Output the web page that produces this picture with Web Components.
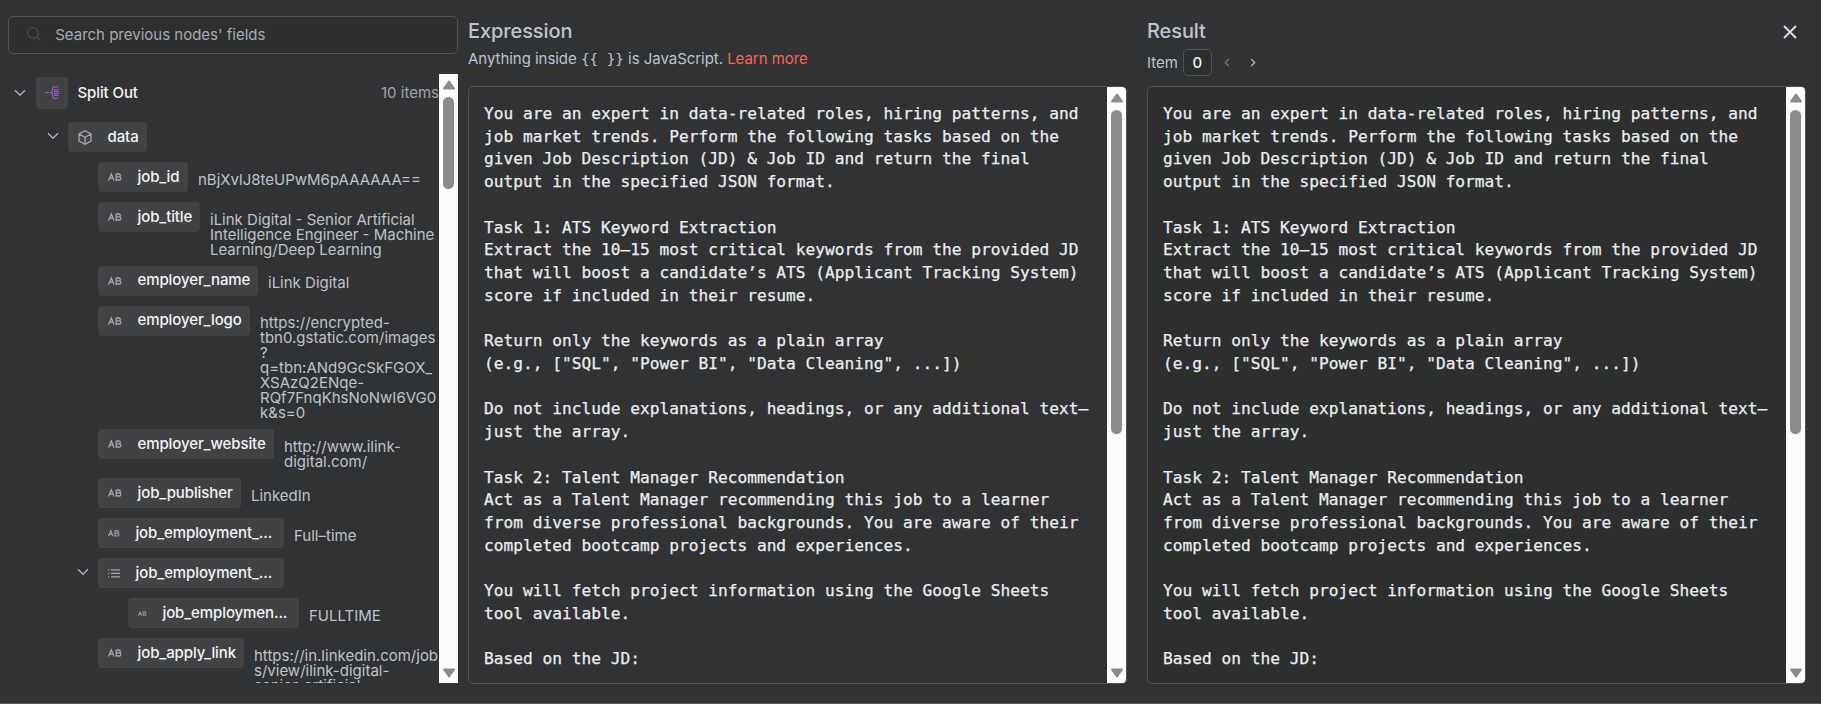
<!DOCTYPE html>
<html lang="en">
<head>
<meta charset="utf-8">
<title>Edit Expression</title>
<style>
html,body{margin:0;height:100%;background:#313234;overflow:hidden}
body{font-family:Inter,"Liberation Sans",sans-serif;color:#bec4cd}
</style>
</head>
<body>
<expression-modal></expression-modal>
<script>
function define(name, html, setup) {
  const t = document.createElement('template');
  t.innerHTML = html;
  customElements.define(name, class extends HTMLElement {
    connectedCallback() {
      if (this.shadowRoot) return;
      this.attachShadow({ mode: 'open' }).append(t.content.cloneNode(true));
      if (setup) setup(this, this.shadowRoot);
    }
  });
}

const icons = {
  search: [14, 14, '<circle cx="6" cy="6" r="5.3"/><path d="M10 10l3.5 3.5"/>'],
  down: [12, 8, '<path d="M1 1.3l5 5 5-5"/>'],
  left: [6, 9, '<path d="M4.8 1L1.3 4.5l3.5 3.5"/>'],
  right: [6, 9, '<path d="M1.2 1l3.5 3.5L1.2 8"/>'],
  close: [14, 14, '<path d="M1 1l12 12M13 1L1 13" stroke-width="1.8"/>'],
  cube: [14, 15, '<path d="M7 .8l6 3.2v7L7 14.2 1 11V4zM1 4l6 3.3L13 4M7 7.3v6.9"/>'],
  list: [12, 9, '<path d="M3 .9h9M3 4.4h9M3 7.9h9M0 .9h1.2M0 4.4h1.2M0 7.9h1.2"/>'],
  ab: [14, 8, '<path d="M.6 7.4L3.3 .9 6 7.4M1.6 5.2h3.4M8.2 1v6h3q1.7 0 1.7-1.6T11.2 3.8h-3M8.2 1h2.7q1.4 0 1.4 1.4t-1.4 1.4"/>'],
  split: [15, 14, '<path d="M0 7h4M13.500 1H10q-2 0-2 2v1.800Q8 7 5.600 7 8 7 8 9.200V11q0 2 2 2h3.500M9.500 4h5M9.500 6h5M9.500 8h5M9.500 10h5" stroke-width="1.300"/>']
};
define('ui-icon', '<style>:host{display:inline-flex;flex:none}svg{display:block;fill:none;stroke:currentColor;stroke-width:1.3;overflow:visible}</style>', (el, root) => {
  const [w, h, p] = icons[el.getAttribute('name')];
  const k = +(el.getAttribute('scale') || 1);
  root.innerHTML += `<svg width="${w * k}" height="${h * k}" viewBox="0 0 ${w} ${h}">${p}</svg>`;
});

define('scroll-bar', `<style>
:host{display:flex;flex-direction:column;align-items:center;box-sizing:border-box;width:19px;flex:none;background:#fcfcfc;padding:6px 0 5px}
svg{display:block;fill:#8b8b8b;stroke:#8b8b8b;stroke-width:2;stroke-linejoin:round;flex:none}
i{width:11px;border-radius:6px;background:#8b8b8b;margin-top:7px;height:var(--thumb)}
span{flex:1}
</style><svg width="12" height="10"><path d="M6 1.500L11 8.500H1z"/></svg><i></i><span></span><svg width="12" height="10"><path d="M6 8.500L11 1.500H1z"/></svg>`);

define('search-field', `<style>
:host{display:flex;align-items:center;box-sizing:border-box;height:38px;border:1px solid #525356;border-radius:5px;background:#2d2e2e;padding:0 18px 1px;font-size:15px;color:#a6abb3}
ui-icon{color:#47494b;margin-right:14.2px;margin-top:-2px}
</style><ui-icon name="search"></ui-icon><slot></slot>`);

define('field-row', `<style>
:host{display:flex;align-items:flex-start;margin-bottom:10px;line-height:15px;font-size:15px}
.caret{display:flex;box-sizing:border-box;width:30px;height:30px;padding:9.5px 0 0 9px;color:#b0b5bd;flex:none}
.chip{display:flex;align-items:center;box-sizing:border-box;height:30px;border-radius:4px;background:#414244;padding-left:10px;flex:none;color:#f3f4f6;font-weight:500}
.chip ui-icon{color:#a3a7ad}
.chip b{font-weight:inherit;white-space:nowrap;line-height:20px;margin-top:-1px}
.val{white-space:pre;padding:9.5px 0 0 10px;margin-bottom:-.8px;color:#bec4cd}
</style><span class="caret"></span><span class="chip"></span><span class="val"><slot></slot></span>`, (el, root) => {
  const a = n => el.getAttribute(n);
  if (a('open') !== null) root.querySelector('.caret').innerHTML = '<ui-icon name="down"></ui-icon>';
  const chip = root.querySelector('.chip');
  chip.style.width = a('w') + 'px';
  const b = document.createElement('b');
  b.textContent = a('label');
  b.style.marginLeft = (a('gap') || 15.5) + 'px';
  b.style.letterSpacing = (a('ls') || -0.1) + 'px';
  chip.innerHTML = `<ui-icon name="${a('icon') || 'ab'}" scale="${a('scale') || 1}"></ui-icon>`;
  chip.append(b);
  el.style.marginLeft = (a('indent') || 68) + 'px';
});

define('node-header', `<style>
:host{display:flex;align-items:center;height:32px;margin:3px 0 13px;padding-left:6px;font-size:15px}
ui-icon{color:#b0b5bd}
.box{display:flex;align-items:center;justify-content:center;width:32px;height:32px;border-radius:4px;background:#414244;margin:0 9.5px 0 10px}
.box ui-icon{color:#8b62c4;margin-top:-1px}
.name{flex:1;color:#f3f4f6;font-weight:500;letter-spacing:-.1px;margin-top:-2px}
.count{color:#a0a5ad;margin-top:-2px}
</style><ui-icon name="down"></ui-icon><span class="box"><ui-icon name="split" scale=".95"></ui-icon></span><span class="name"><slot></slot></span><span class="count">10 items</span>`);

define('schema-panel', `<style>
:host{display:flex;flex-direction:column;width:450px;padding:16px 10px 0 8px;flex:none}
.body{display:flex;height:609px;margin-top:20px;overflow:hidden}
.list{flex:1;min-width:0;overflow:hidden}
scroll-bar{--thumb:92px}
</style>
<search-field>Search previous nodes' fields</search-field>
<div class="body"><div class="list">
<node-header>Split Out</node-header>
<field-row indent="30" open icon="cube" w="79" label="data"></field-row>
<field-row indent="60" w="90" label="job_id">nBjXvlJ8teUPwM6pAAAAAA==</field-row>
<field-row indent="60" w="102" label="job_title">iLink Digital - Senior Artificial
Intelligence Engineer - Machine
Learning/Deep Learning</field-row>
<field-row indent="60" w="160" label="employer_name">iLink Digital</field-row>
<field-row indent="60" w="152" label="employer_logo">https://encrypted-
tbn0.gstatic.com/images
?
q=tbn:ANd9GcSkFGOX_
XSAzQ2ENqe-
RQf7FnqKhsNoNwI6VG0
k&amp;s=0</field-row>
<field-row indent="60" w="176" label="employer_website">http://www.ilink-
digital.com/</field-row>
<field-row indent="60" w="143" label="job_publisher">LinkedIn</field-row>
<field-row indent="60" w="186" scale=".85" label="job_employment_...">Full–time</field-row>
<field-row indent="60" w="186" open icon="list" label="job_employment_..."></field-row>
<field-row indent="90" w="171" scale=".64" label="job_employmen...">FULLTIME</field-row>
<field-row indent="60" w="146" label="job_apply_link">https://in.linkedin.com/job
s/view/ilink-digital-
senior-artificial</field-row>
</div><scroll-bar></scroll-bar></div>`);

define('code-box', `<style>
:host{display:flex;box-sizing:border-box;height:598px;border:1px solid #525356;border-radius:5px;overflow:hidden;background:var(--box-bg,#313234)}
pre{flex:1;min-width:0;margin:0;padding:16px 0 0 15px;font:16.2px/22.72px "DejaVu Sans Mono",monospace;color:#eceef0;-webkit-text-stroke:.25px #eceef0;overflow:hidden}
scroll-bar{--thumb:324px}
</style><pre></pre><scroll-bar></scroll-bar>`, (el, root) => {
  root.querySelector('pre').textContent = `You are an expert in data-related roles, hiring patterns, and
job market trends. Perform the following tasks based on the
given Job Description (JD) & Job ID and return the final
output in the specified JSON format.

Task 1: ATS Keyword Extraction
Extract the 10–15 most critical keywords from the provided JD
that will boost a candidate’s ATS (Applicant Tracking System)
score if included in their resume.

Return only the keywords as a plain array
(e.g., ["SQL", "Power BI", "Data Cleaning", ...])

Do not include explanations, headings, or any additional text—
just the array.

Task 2: Talent Manager Recommendation
Act as a Talent Manager recommending this job to a learner
from diverse professional backgrounds. You are aware of their
completed bootcamp projects and experiences.

You will fetch project information using the Google Sheets
tool available.

Based on the JD:`;
});

define('editor-pane', `<style>
:host{display:block;width:659px;flex:none}
.head{box-sizing:border-box;height:86px;padding-top:19px}
.title{display:flex;justify-content:space-between;align-items:flex-start;font-size:20px;line-height:24px;font-weight:500;height:24px;letter-spacing:-.1px}
</style><div class="head"><div class="title"><slot name="title"></slot><slot name="action"></slot></div><slot></slot></div><code-box></code-box>`);

define('expression-hint', `<style>
:host{display:block;font-size:15px;line-height:20px;padding-top:6px;white-space:pre;letter-spacing:-.04px}
code{font:14.3px "DejaVu Sans Mono",monospace;letter-spacing:0}
a{color:#f2695a}
</style>Anything inside <code>{{ }}</code> is JavaScript. <a>Learn more</a>`);

define('item-picker', `<style>
:host{display:flex;align-items:center;height:27px;padding-top:6px;font-size:15px}
.num{display:flex;align-items:center;justify-content:center;box-sizing:border-box;width:29px;height:27px;border:1px solid #525356;border-radius:5px;background:#2d2e2e;color:#f3f4f6;margin:0 12px 0 5px;font-weight:500}
ui-icon{color:#74787e}
ui-icon+ui-icon{margin-left:20px;color:#b0b5bd}
</style>Item<span class="num">0</span><ui-icon name="left"></ui-icon><ui-icon name="right"></ui-icon>`);

define('expression-modal', `<style>
:host{display:flex;box-sizing:border-box;width:1821px;height:704px;background:#313234;border-bottom:1px solid #5a5b5d}
editor-pane+editor-pane{margin-left:20px;--box-bg:#2d2e2e}
ui-icon{color:#dfe2e6;margin:6px 9px 0 0}
</style>
<schema-panel></schema-panel>
<editor-pane><span slot="title">Expression</span><expression-hint></expression-hint></editor-pane>
<editor-pane><span slot="title">Result</span><ui-icon slot="action" name="close"></ui-icon><item-picker></item-picker></editor-pane>`);
</script>
</body>
</html>
